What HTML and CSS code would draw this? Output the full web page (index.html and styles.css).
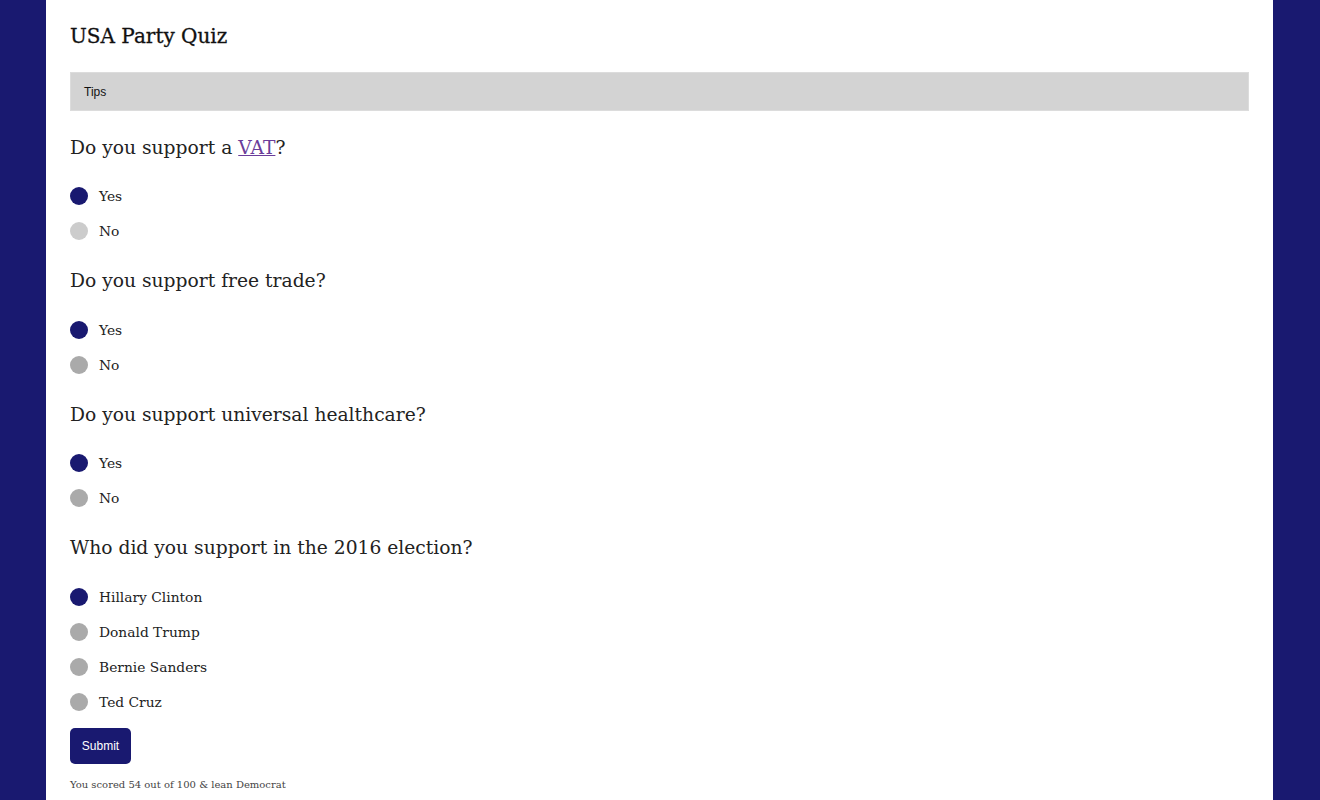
FILE: index.html
```html
<!DOCTYPE html>
<html lang="en">
<head>
<meta charset="utf-8">
<title>USA Party Quiz</title>
<link rel="stylesheet" href="styles.css">
</head>
<body>
<main class="page">
  <h1 class="title">USA Party Quiz</h1>
  <div class="tips">Tips</div>
  <form class="quiz">
    <fieldset class="question">
      <h2 class="q-title">Do you support a <a href="#" class="q-link">VAT</a>?</h2>
      <label class="option"><input type="radio" name="q1" class="radio" checked><span>Yes</span></label>
      <label class="option"><input type="radio" name="q1" class="radio radio-light"><span>No</span></label>
    </fieldset>
    <fieldset class="question">
      <h2 class="q-title">Do you support free trade?</h2>
      <label class="option"><input type="radio" name="q2" class="radio" checked><span>Yes</span></label>
      <label class="option"><input type="radio" name="q2" class="radio"><span>No</span></label>
    </fieldset>
    <fieldset class="question">
      <h2 class="q-title">Do you support universal healthcare?</h2>
      <label class="option"><input type="radio" name="q3" class="radio" checked><span>Yes</span></label>
      <label class="option"><input type="radio" name="q3" class="radio"><span>No</span></label>
    </fieldset>
    <fieldset class="question">
      <h2 class="q-title">Who did you support in the 2016 election?</h2>
      <label class="option"><input type="radio" name="q4" class="radio" checked><span>Hillary Clinton</span></label>
      <label class="option"><input type="radio" name="q4" class="radio"><span>Donald Trump</span></label>
      <label class="option"><input type="radio" name="q4" class="radio"><span>Bernie Sanders</span></label>
      <label class="option"><input type="radio" name="q4" class="radio"><span>Ted Cruz</span></label>
    </fieldset>
    <button type="button" class="submit">Submit</button>
    <p class="result">You scored 54 out of 100 &amp; lean Democrat</p>
  </form>
</main>
</body>
</html>
```
FILE: styles.css
```css
html, body {
  margin: 0;
  padding: 0;
}
body {
  background: #191970;
  font-family: "DejaVu Serif", "Liberation Serif", serif;
  color: #222;
  height: 800px;
  overflow: hidden;
  padding-left: 46px;
}
.page {
  width: 1227px;
  box-sizing: border-box;
  background: #fff;
  padding: 18px 24px 0 24px;
  height: 800px;
}
.title {
  margin: 0;
  font-size: 20px;
  font-weight: 400;
  line-height: 36px;
  color: #111;
  -webkit-text-stroke: 0.3px #111;
}
.tips {
  margin-top: 18px;
  background: #d3d3d3;
  height: 39px;
  box-sizing: border-box;
  padding: 12px 13px 0 13px;
  font-family: "Liberation Sans", Arial, sans-serif;
  font-size: 12px;
  color: #111;
  border: 1px solid #dcdcdc;
}
.quiz {
  margin: 0;
  padding-top: 4px;
}
.question {
  border: 0;
  margin: 0;
  padding: 0;
  display: flex;
  flex-direction: column;
}
.q-title {
  margin: 17.5px 0 16px 0;
  font-size: 18.7px;
  font-weight: 400;
  line-height: 30px;
  color: #222;
}
.q-link {
  color: #6a3d9a;
}
.option {
  display: flex;
  align-items: center;
  height: 35px;
  font-size: 13.8px;
  color: #222;
}
.radio {
  appearance: none;
  -webkit-appearance: none;
  width: 18px;
  height: 18px;
  border-radius: 50%;
  background: #aaa;
  margin: 0 11px 0 0;
  flex: none;
}
.radio-light {
  background: #cccccc;
}
.radio:checked {
  background: #191970;
}
.submit {
  margin-top: 9px;
  width: 61px;
  height: 36px;
  border: 0;
  border-radius: 5px;
  background: #191970;
  color: #fff;
  font-family: "Liberation Sans", Arial, sans-serif;
  font-size: 12px;
  padding: 0;
}
.result {
  margin: 15px 0 0 0;
  font-size: 10px;
  line-height: 12px;
  color: #444;
}
```
